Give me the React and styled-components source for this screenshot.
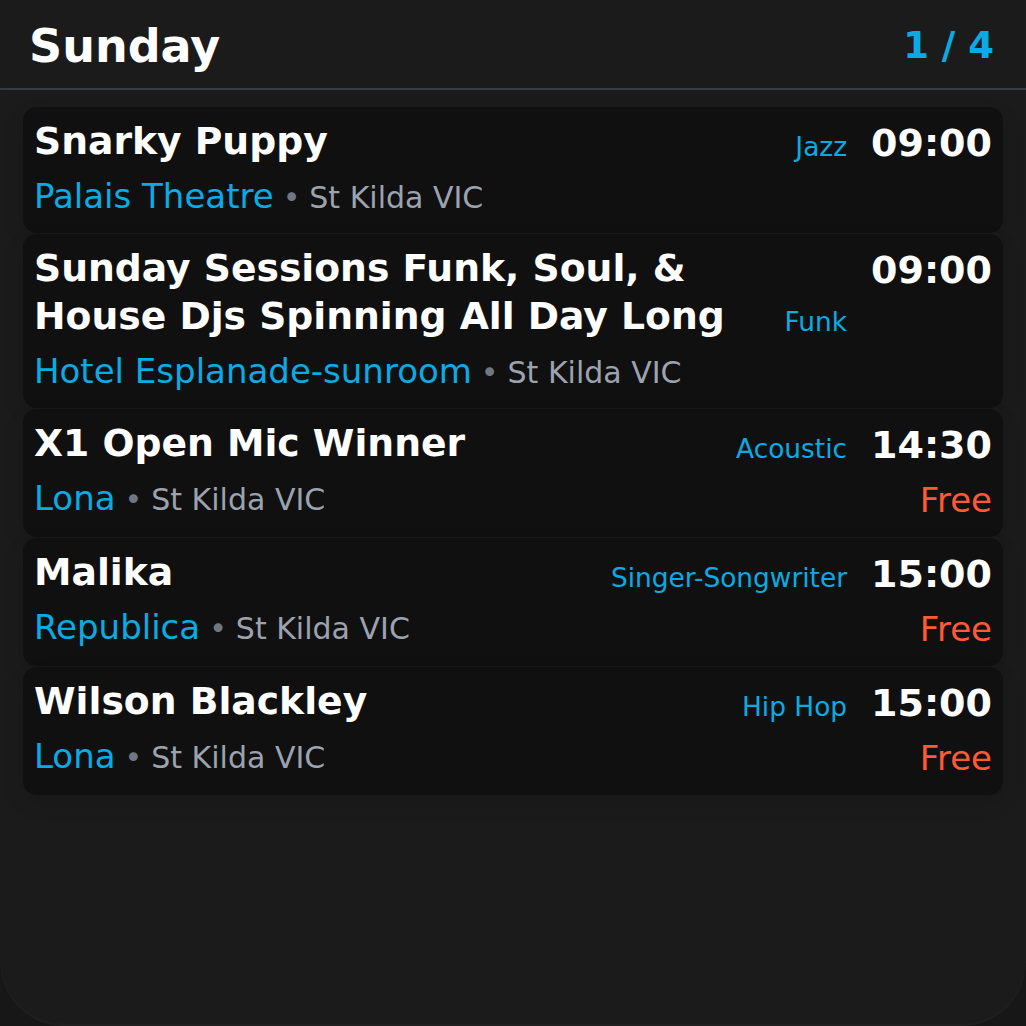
import React from "react";
import styled, { createGlobalStyle } from "styled-components";

const GlobalStyle = createGlobalStyle`
  html, body {
    margin: 0;
    padding: 0;
    background: #171717;
  }
  body {
    font-family: "DejaVu Sans", "Liberation Sans", sans-serif;
  }
`;

const events = [
  {
    title: "Snarky Puppy",
    genre: "Jazz",
    time: "09:00",
    venue: "Palais Theatre",
    place: "St Kilda VIC",
  },
  {
    title: "Sunday Sessions Funk, Soul, & House Djs Spinning All Day Long",
    genre: "Funk",
    time: "09:00",
    venue: "Hotel Esplanade-sunroom",
    place: "St Kilda VIC",
  },
  {
    title: "X1 Open Mic Winner",
    genre: "Acoustic",
    time: "14:30",
    venue: "Lona",
    place: "St Kilda VIC",
    price: "Free",
  },
  {
    title: "Malika",
    genre: "Singer-Songwriter",
    time: "15:00",
    venue: "Republica",
    place: "St Kilda VIC",
    price: "Free",
  },
  {
    title: "Wilson Blackley",
    genre: "Hip Hop",
    time: "15:00",
    venue: "Lona",
    place: "St Kilda VIC",
    price: "Free",
  },
];

const App = () => {
  return (
    <>
      <GlobalStyle />
      <Panel>
        <Header>
          <Day>Sunday</Day>
          <Pager>1 / 4</Pager>
        </Header>
        <List>
          {events.map((ev, i) => (
            <Card key={i}>
              <TopRow>
                <Title>{ev.title}</Title>
                <Genre>{ev.genre}</Genre>
                <Time>{ev.time}</Time>
              </TopRow>
              <BottomRow>
                <Where>
                  <Venue>{ev.venue}</Venue>
                  <Dot>•</Dot>
                  <Place>{ev.place}</Place>
                </Where>
                {ev.price && <Price>{ev.price}</Price>}
              </BottomRow>
            </Card>
          ))}
        </List>
      </Panel>
    </>
  );
};

const Panel = styled.div`
  box-sizing: border-box;
  width: 1026px;
  height: 1026px;
  background: #1b1b1b;
  border-radius: 0 0 64px 64px;
  box-shadow: inset 0 -2px 3px rgba(255, 255, 255, 0.03);
  display: flex;
  flex-direction: column;
  overflow: hidden;
`;

const Header = styled.div`
  display: flex;
  align-items: center;
  justify-content: space-between;
  padding: 20px 32px 16px 29px;
  border-bottom: 2px solid #363c46;
`;

const Day = styled.h1`
  margin: 0;
  font-size: 46px;
  line-height: 52px;
  font-weight: 700;
  color: #ffffff;
`;

const Pager = styled.span`
  font-size: 37px;
  line-height: 52px;
  font-weight: 700;
  color: #0aabe3;
`;

const List = styled.div`
  display: flex;
  flex-direction: column;
  gap: 1px;
  padding: 17px 23px 0;
`;

const Card = styled.div`
  background: #101010;
  border-radius: 14px;
  padding: 10px 11px 15px;
  box-shadow: 0 8px 20px rgba(0, 0, 0, 0.12);
`;

const TopRow = styled.div`
  display: flex;
  align-items: flex-start;
  gap: 24px;
`;

const Title = styled.div`
  flex: 1;
  font-size: 37.7px;
  line-height: 48px;
  font-weight: 700;
  color: #ffffff;
`;

const Genre = styled.div`
  align-self: flex-end;
  font-size: 26.4px;
  line-height: 37px;
  color: #0aabe3;
  white-space: nowrap;
`;

const Time = styled.div`
  padding-top: 4px;
  font-size: 38px;
  line-height: 44px;
  font-weight: 700;
  color: #ffffff;
`;

const BottomRow = styled.div`
  display: flex;
  align-items: flex-start;
  justify-content: space-between;
  margin-top: 9px;
`;

const Where = styled.div`
  display: flex;
  align-items: baseline;
  gap: 9px;
`;

const Venue = styled.span`
  font-size: 34px;
  line-height: 44px;
  color: #0aabe3;
`;

const Dot = styled.span`
  font-size: 30px;
  color: #717782;
`;

const Place = styled.span`
  font-size: 30px;
  color: #9ca3af;
`;

const Price = styled.span`
  padding-top: 2px;
  font-size: 34px;
  line-height: 44px;
  color: #ff5a36;
`;

export default App;
